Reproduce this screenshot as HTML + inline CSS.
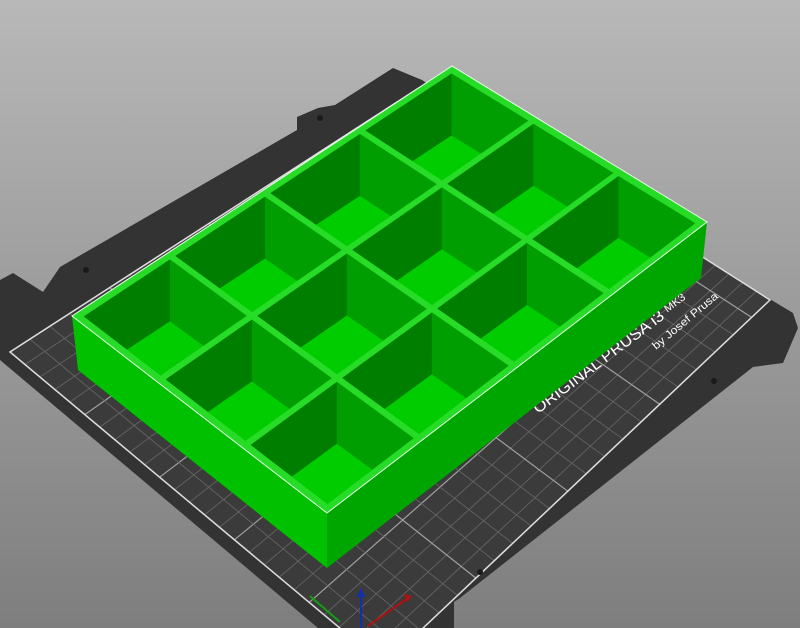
<!DOCTYPE html>
<html><head><meta charset="utf-8"><style>
html,body{margin:0;padding:0;width:800px;height:628px;overflow:hidden}
body{background:linear-gradient(#b8b8b8,#7e7e7e)}
svg{display:block}
</style></head><body>
<svg id="s" width="800" height="628" viewBox="0 0 800 628" xmlns="http://www.w3.org/2000/svg">
<polygon fill="#333" points="393,68 422,80 700,257 793,313 798,328 783,363 753,367 460,598 454,602 454,628 318,628 0,360 0,280 13,273 43,292 60,267 297,130 297,117 318,108 335,105 393,68"/>
<g id="grid"></g>
<g fill="#fff" font-family="Liberation Sans, sans-serif">
<text x="0" y="0" font-size="16" transform="translate(538,414) rotate(-37)" textLength="188" lengthAdjust="spacingAndGlyphs">ORIGINAL PRUSA i3 <tspan font-size="11" dy="-3">MK3</tspan></text>
<text x="0" y="0" font-size="11" transform="translate(656,350) rotate(-40)" textLength="82" lengthAdjust="spacingAndGlyphs">by Josef Prusa</text>
</g>
<g fill="#1a1a1a"><circle cx="320" cy="118" r="3"/><circle cx="86" cy="270" r="3"/><circle cx="714" cy="381" r="3"/><circle cx="480" cy="572" r="3"/></g>
<g id="box"></g>
<line x1="361" y1="628" x2="361" y2="594" stroke="#1030b0" stroke-width="2"/>
<polygon points="357,597 365,597 361,588" fill="#1030b0"/>
<line x1="368" y1="626" x2="408" y2="598" stroke="#b01010" stroke-width="2"/>
<polygon points="404,594 412,596 407,602" fill="#b01010"/>
<line x1="310" y1="596" x2="340" y2="622" stroke="#10a010" stroke-width="2"/>
</svg>
<script>
const NS="http://www.w3.org/2000/svg";
function el(p,t,a){const e=document.createElementNS(NS,t);for(const k in a)e.setAttribute(k,a[k]);p.appendChild(e);return e;}
const g=document.getElementById('grid');
const SF=[384,665],SL=[10,352],SR=[770,300],SB=[428,82];
function S(a,b){return [0,1].map(k=>(1-a)*(1-b)*SF[k]+a*(1-b)*SL[k]+a*b*SB[k]+(1-a)*b*SR[k]);}
const pts=[S(0,0),S(1,0),S(1,1),S(0,1)].map(p=>p.join(',')).join(' ');
el(g,'polygon',{points:pts,fill:'#3b3b3b'});
const na=25,nb=21;
for(let i=0;i<=na;i++){const p=S(i/na,0),q=S(i/na,1);el(g,'line',{x1:p[0],y1:p[1],x2:q[0],y2:q[1],stroke:i%5==0?'#a0a0a0':'#686868','stroke-width':i%5==0?1.2:0.8});}
for(let i=0;i<=nb;i++){const p=S(0,i/nb),q=S(1,i/nb);el(g,'line',{x1:p[0],y1:p[1],x2:q[0],y2:q[1],stroke:i%5==0?'#a0a0a0':'#686868','stroke-width':i%5==0?1.2:0.8});}
el(g,'polygon',{points:pts,fill:'none',stroke:'#ddd','stroke-width':1.5});
const b=document.getElementById('box');
const L=[72,316],B=[327,513],C=[707,222],D=[452,66];
function P(u,v){return [0,1].map(k=>(1-u)*(1-v)*L[k]+u*(1-v)*B[k]+u*v*C[k]+(1-u)*v*D[k]);}
function poly(arr,fill,extra){const a={points:arr.map(p=>p[0].toFixed(1)+','+p[1].toFixed(1)).join(' '),fill:fill};Object.assign(a,extra||{});return el(b,'polygon',a);}
function dn(p,h){return [p[0],p[1]+h];}
poly([L,B,dn(B,55),[78,370]],'#00c000');
poly([B,C,[701,278],dn(B,55)],'#00a600');
poly([L,B,C,D],'#26dc26',{stroke:'#e8ffe8','stroke-width':1});
const mu=0.022,mv=0.016,du=0.01,dv=0.007;
let id=0;
for(let i=0;i<3;i++)for(let j=0;j<4;j++){
 const u0=i/3+(i==0?mu:du),u1=(i+1)/3-(i==2?mu:du),v0=j/4+(j==0?mv:dv),v1=(j+1)/4-(j==3?mv:dv);
 const q=[P(u0,v0),P(u1,v0),P(u1,v1),P(u0,v1)];
 const cid='c'+(id++);
 const cp=el(b,'clipPath',{id:cid});
 el(cp,'polygon',{points:q.map(p=>p.join(',')).join(' ')});
 const grp=el(b,'g',{'clip-path':'url(#'+cid+')'});
 const h=62;
 const f=q.map(p=>dn(p,h));
 const mk=(arr,fill)=>el(grp,'polygon',{points:arr.map(p=>p.join(',')).join(' '),fill:fill});
 mk(q,'#00a000');
 mk([q[0],q[3],f[3],f[0]],'#007e00');
 mk([q[3],q[2],f[2],f[3]],'#009e00');
 mk(f,'#00cc00');
}
</script>
</body></html>
